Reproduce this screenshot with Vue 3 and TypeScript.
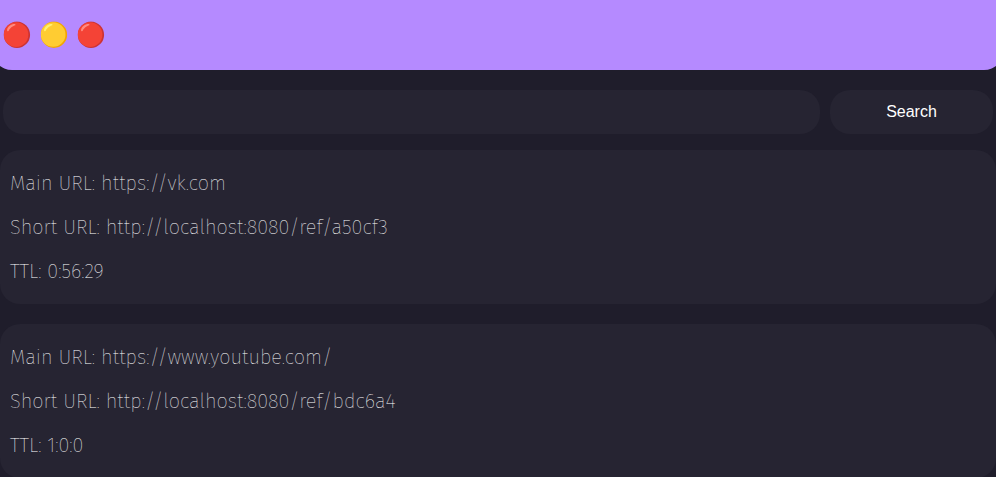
<script setup lang="ts">
import { ref } from 'vue'

interface Link {
  mainUrl: string
  shortUrl: string
  ttl: string
}

const query = ref('')
const links: Link[] = [
  { mainUrl: 'https://vk.com', shortUrl: 'http://localhost:8080/ref/a50cf3', ttl: '0:56:29' },
  { mainUrl: 'https://www.youtube.com/', shortUrl: 'http://localhost:8080/ref/bdc6a4', ttl: '1:0:0' },
]
</script>

<template>
  <div class="page">
    <header class="header">🔴 🟡 🔴</header>
    <form class="search" @submit.prevent>
      <input v-model="query" class="field" type="text" />
      <button class="button" type="submit">Search</button>
    </form>
    <main class="list">
      <section v-for="link in links" :key="link.shortUrl" class="card">
        <p class="line">Main URL: {{ link.mainUrl }}</p>
        <p class="line">Short URL: {{ link.shortUrl }}</p>
        <p class="line">TTL: {{ link.ttl }}</p>
      </section>
    </main>
  </div>
</template>

<style>
body {
  background: #1f1d2b;
  overflow: hidden;
}
</style>

<style scoped>
.page {
  height: 477px;
  overflow: hidden;
  background: #1f1d2b;
  font-family: 'Fira Sans', 'Noto Sans', sans-serif;
}
.header {
  display: flex;
  align-items: center;
  box-sizing: border-box;
  height: 70px;
  margin: 0 -8px;
  padding: 0 10px;
  background: #b58aff;
  border-radius: 0 0 20px 20px;
  font-size: 24px;
  font-weight: 100;
}
.search {
  display: flex;
  gap: 10px;
  padding: 20px 3px 16px;
}
.field,
.button {
  box-sizing: border-box;
  height: 44px;
  margin: 0;
  border: 0;
  border-radius: 20px;
  outline: 0;
  background: #262432;
  color: #fff;
  font: 16px 'Liberation Sans', sans-serif;
}
.field {
  flex: 1;
  min-width: 0;
  padding: 0 16px;
}
.button {
  width: 163px;
}
.list {
  display: flex;
  flex-direction: column;
  gap: 20px;
}
.card {
  display: flex;
  flex-direction: column;
  gap: 20px;
  box-sizing: border-box;
  height: 154px;
  flex: none;
  padding: 21px 10px;
  border-radius: 20px;
  background: #262432;
}
.line {
  margin: 0;
  color: #fff;
  font-size: 20px;
  font-weight: 100;
  line-height: 24px;
  white-space: pre;
}
</style>
